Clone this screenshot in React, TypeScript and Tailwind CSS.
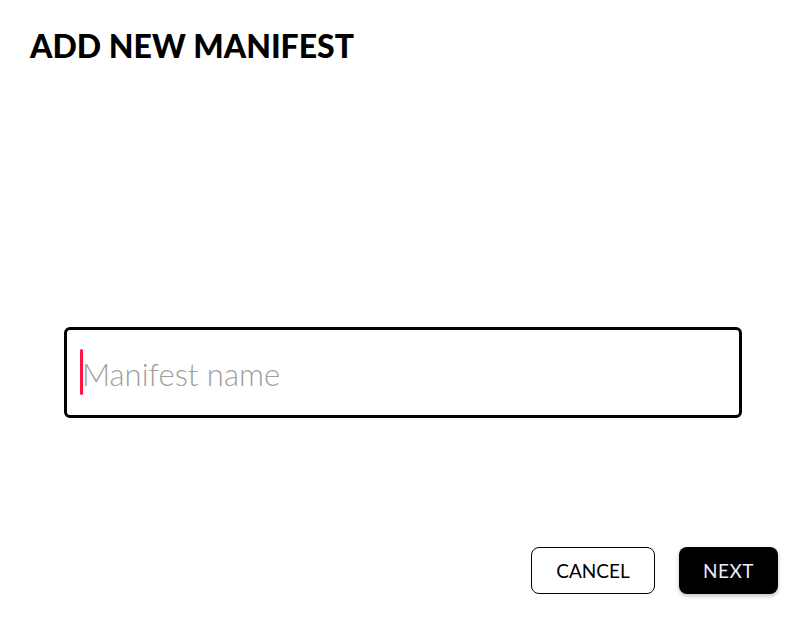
import { useState } from 'react'

export default function App() {
  const [name, setName] = useState('')

  return (
    <div className="h-[625px] w-full bg-white flex flex-col font-['Lato',sans-serif] text-black">
      <h1 className="pl-[30px] pt-[24px] text-[32px] leading-[44px] font-black">
        ADD NEW MANIFEST
      </h1>

      <div className="px-[64px] mt-[259px]">
        <div className="relative w-[678px] h-[91px] border-[3px] border-black rounded-[6px] flex items-center pl-[14px]">
          {/* caret */}
          <span className="absolute left-[13px] top-[19px] w-[3px] h-[46px] bg-[#ff1744] rounded-full" />
          <input
            value={name}
            onChange={(e) => setName(e.target.value)}
            placeholder="Manifest name"
            className="w-full h-full bg-transparent outline-none pl-[1px] pt-[2px] text-[31px] font-light text-black placeholder:text-[#9e9e9e] font-['Lato',sans-serif]"
          />
        </div>
      </div>

      <div className="mt-auto flex justify-end gap-[24px] pr-[29px] pb-[31px]">
        <button className="w-[124px] h-[47px] border border-black rounded-[8px] bg-white text-[19px] pt-[2px]">
          CANCEL
        </button>
        <button className="w-[99px] h-[47px] rounded-[8px] bg-black text-[#ececfb] text-[19px] tracking-[0.5px] pt-[2px] shadow-[0_2px_4px_rgba(0,0,0,0.25)]">
          NEXT
        </button>
      </div>
    </div>
  )
}
